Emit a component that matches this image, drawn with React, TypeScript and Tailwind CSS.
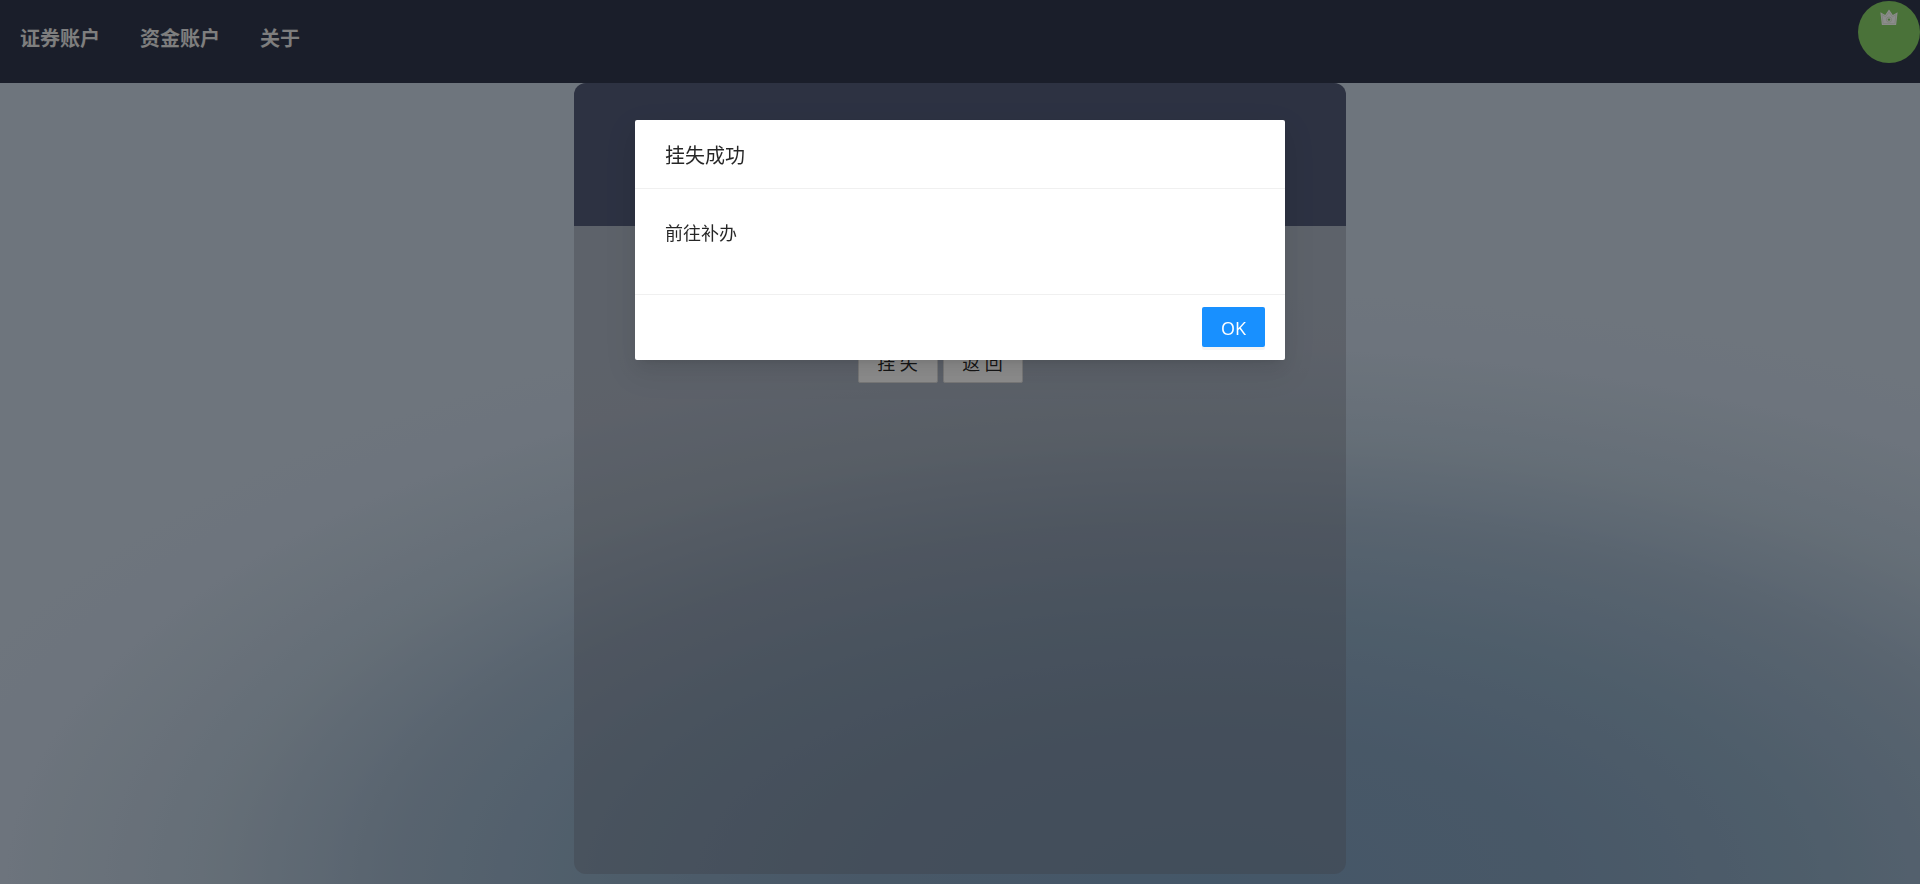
const links = ["证券账户", "资金账户", "关于"];

function CrownIcon() {
  return (
    <svg viewBox="0 0 18 17" className="h-[17px] w-[18px]" aria-hidden="true">
      <path
        d="M.4 3.2 5.2 6.1 9 .6l3.8 5.5 4.8-2.9-1.4 12.2a.8.8 0 0 1-.8.7H2.6a.8.8 0 0 1-.8-.7Z"
        fill="#fff"
      />
      <path
        d="M2 5.6 5.6 7.8 9 3.2l3.4 4.6L16 5.6l-1.1 9.1H3.1Z"
        fill="none"
        stroke="#e7f2e1"
        strokeWidth="1"
      />
      <circle cx="9" cy="10.6" r="2.6" fill="none" stroke="#d5e8cb" strokeWidth=".8" />
      <circle cx="9" cy="10.6" r="1.2" fill="#87d068" />
    </svg>
  );
}

function NavBar() {
  return (
    <header className="flex h-[83px] items-start justify-between bg-[#31384d]">
      <nav className="flex">
        {links.map((label) => (
          <a key={label} href="#" className="px-5 py-6 text-xl leading-[30px] font-bold text-[#e6e6e6]">
            {label}
          </a>
        ))}
      </nav>
      <button
        type="button"
        aria-label="用户"
        className="mt-px flex size-[62px] items-start justify-center rounded-full bg-[#87d068] pt-2"
      >
        <CrownIcon />
      </button>
    </header>
  );
}

function ActionButton({ label }: { label: string }) {
  return (
    <button
      type="button"
      className="h-10 w-20 rounded-xs border border-[#d9d9d9] bg-white text-lg leading-7 text-black/85"
    >
      {label}
    </button>
  );
}

function LossCard() {
  return (
    <section className="mx-auto mb-2.5 flex w-[772px] max-w-full grow flex-col overflow-hidden rounded-xl bg-[rgb(108_110_120/0.33)]">
      <div className="h-[143px] bg-[#525b79]" />
      <div className="mr-10 flex justify-center gap-[5px] pt-[117px]">
        <ActionButton label="挂 失" />
        <ActionButton label="返 回" />
      </div>
    </section>
  );
}

function SuccessDialog() {
  return (
    <div className="fixed inset-0 flex items-start justify-center bg-black/45 pt-[120px]">
      <div
        role="dialog"
        aria-modal="true"
        aria-labelledby="dialog-title"
        className="w-[650px] max-w-full rounded-xs bg-white text-black/85 shadow-[0_4px_8px_-5px_rgba(0,0,0,0.12),0_8px_20px_rgba(0,0,0,0.08),0_11px_35px_10px_rgba(0,0,0,0.05)]"
      >
        <h2 id="dialog-title" className="border-b border-[#f0f0f0] px-[30px] pt-[22px] pb-[18px] text-xl leading-7 font-normal">
          挂失成功
        </h2>
        <p className="px-[30px] pt-[30px] pb-[47px] text-lg leading-7">前往补办</p>
        <div className="flex justify-end border-t border-[#f0f0f0] px-5 pt-3 pb-[13px]">
          <button
            type="button"
            className="h-10 w-[63px] rounded-xs bg-[#1890ff] pt-0.5 text-lg leading-7 text-white shadow-[0_3px_0_rgba(0,0,0,0.045)]"
          >
            OK
          </button>
        </div>
      </div>
    </div>
  );
}

export default function App() {
  return (
    <div className="flex min-h-screen flex-col bg-[#c8d5e4] bg-[radial-gradient(ellipse_64%_62%_at_63%_100%,#7d9ebd_0%,#84a0bc_28%,#8eaac2_48%,#a0b5ca_66%,#b8c9d9_82%,#c6d3e3_98%,#c8d5e4_108%)] font-['Open_Sans','Noto_Sans_CJK_SC',sans-serif]">
      <NavBar />
      <main className="flex grow flex-col">
        <LossCard />
      </main>
      <SuccessDialog />
    </div>
  );
}
